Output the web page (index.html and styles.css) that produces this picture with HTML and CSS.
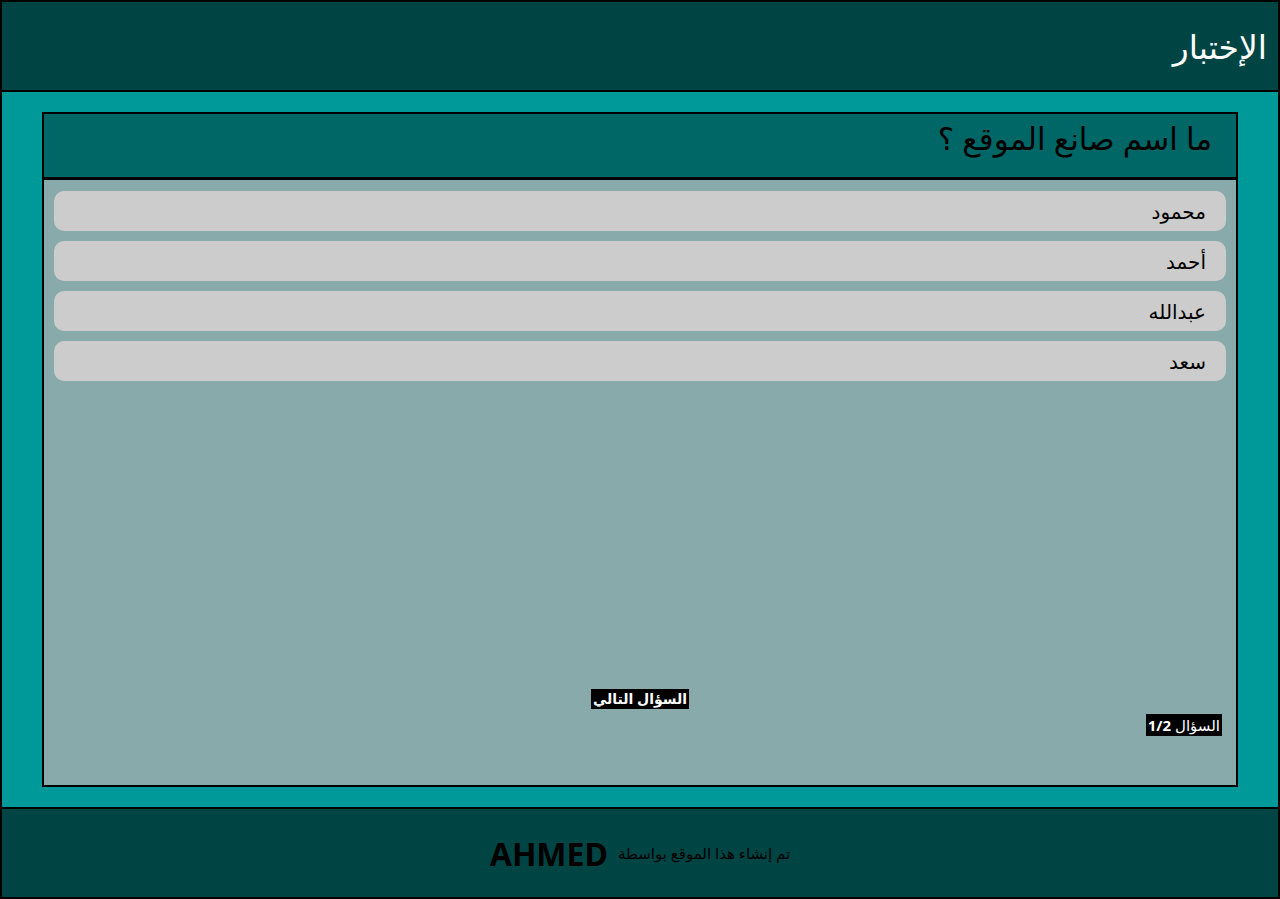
FILE: index.html
```html
<!DOCTYPE html>
<html lang="ar" dir="rtl">
<head>
<meta charset="utf-8">
<title>الإختبار</title>
<link rel="stylesheet" href="styles.css">
</head>
<body>
<header class="top">
  <h1 class="top-title">الإختبار</h1>
</header>
<main class="main">
  <section class="quiz">
    <div class="quiz-head">
      <h2 class="question">ما اسم صانع الموقع ؟</h2>
    </div>
    <div class="quiz-body">
      <ul class="answers">
        <li class="answer">محمود</li>
        <li class="answer">أحمد</li>
        <li class="answer">عبدالله</li>
        <li class="answer">سعد</li>
      </ul>
      <div class="controls">
        <button class="next">السؤال التالي</button>
      </div>
      <div class="counter-row">
        <span class="counter">السؤال <b>1/2</b></span>
      </div>
    </div>
  </section>
</main>
<footer class="bottom">
  <p class="credit">تم إنشاء هذا الموقع بواسطة <strong class="author">AHMED</strong></p>
</footer>
</body>
</html>
```
FILE: styles.css
```css
* { box-sizing: border-box; }
html, body { margin: 0; padding: 0; }
body {
  font-family: "Noto Sans", "DejaVu Sans", sans-serif;
  background: #009999;
  width: 1280px;
  height: 899px;
  overflow: hidden;
}
.top {
  height: 92px;
  background: #004444;
  border: 2px solid #000;
  display: flex;
  align-items: center;
  padding: 0 11px;
}
.top-title {
  margin: 0;
  color: #fff;
  font-weight: normal;
  font-size: 33px;
}
.main {
  height: 715px;
  border-left: 2px solid #000;
  border-right: 2px solid #000;
  padding: 20px 40px;
}
.quiz {
  height: 675px;
  border: 2px solid #000;
  display: flex;
  flex-direction: column;
}
.quiz-head {
  height: 66px;
  background: #006666;
  border-bottom: 3px solid #000;
  display: flex;
  align-items: flex-start;
  padding: 3px 24px 0;
}
.question {
  margin: 0;
  font-weight: normal;
  font-size: 31px;
  color: #000;
}
.quiz-body {
  flex: 1;
  background: #88aaaa;
  padding: 11px 10px 0;
  display: flex;
  flex-direction: column;
}
.answers {
  list-style: none;
  margin: 0;
  padding: 0;
  display: flex;
  flex-direction: column;
  gap: 10px;
}
.answer {
  height: 40px;
  background: #cccccc;
  border-radius: 10px;
  display: flex;
  align-items: center;
  padding: 0 20px;
  font-size: 20px;
  color: #000;
}
.controls {
  margin-top: 308px;
  display: flex;
  justify-content: center;
}
.next {
  background: #000;
  color: #fff;
  border: 0;
  padding: 0 2px;
  height: 20px;
  font-family: inherit;
  font-size: 14px;
  font-weight: bold;
  line-height: 20px;
  cursor: pointer;
}
.counter-row {
  margin-top: 5px;
  display: flex;
  padding-right: 4px;
}
.counter {
  background: #000;
  color: #fff;
  font-size: 15px;
  line-height: 22px;
  height: 22px;
  padding: 0 2px;
}
.counter b { font-weight: bold; }
.bottom {
  height: 92px;
  background: #004444;
  border: 2px solid #000;
  display: flex;
  align-items: center;
  justify-content: center;
}
.credit {
  margin: 0;
  font-size: 15px;
  color: #000;
  display: flex;
  align-items: center;
  gap: 10px;
}
.author {
  font-size: 32px;
  font-weight: bold;
}
```
